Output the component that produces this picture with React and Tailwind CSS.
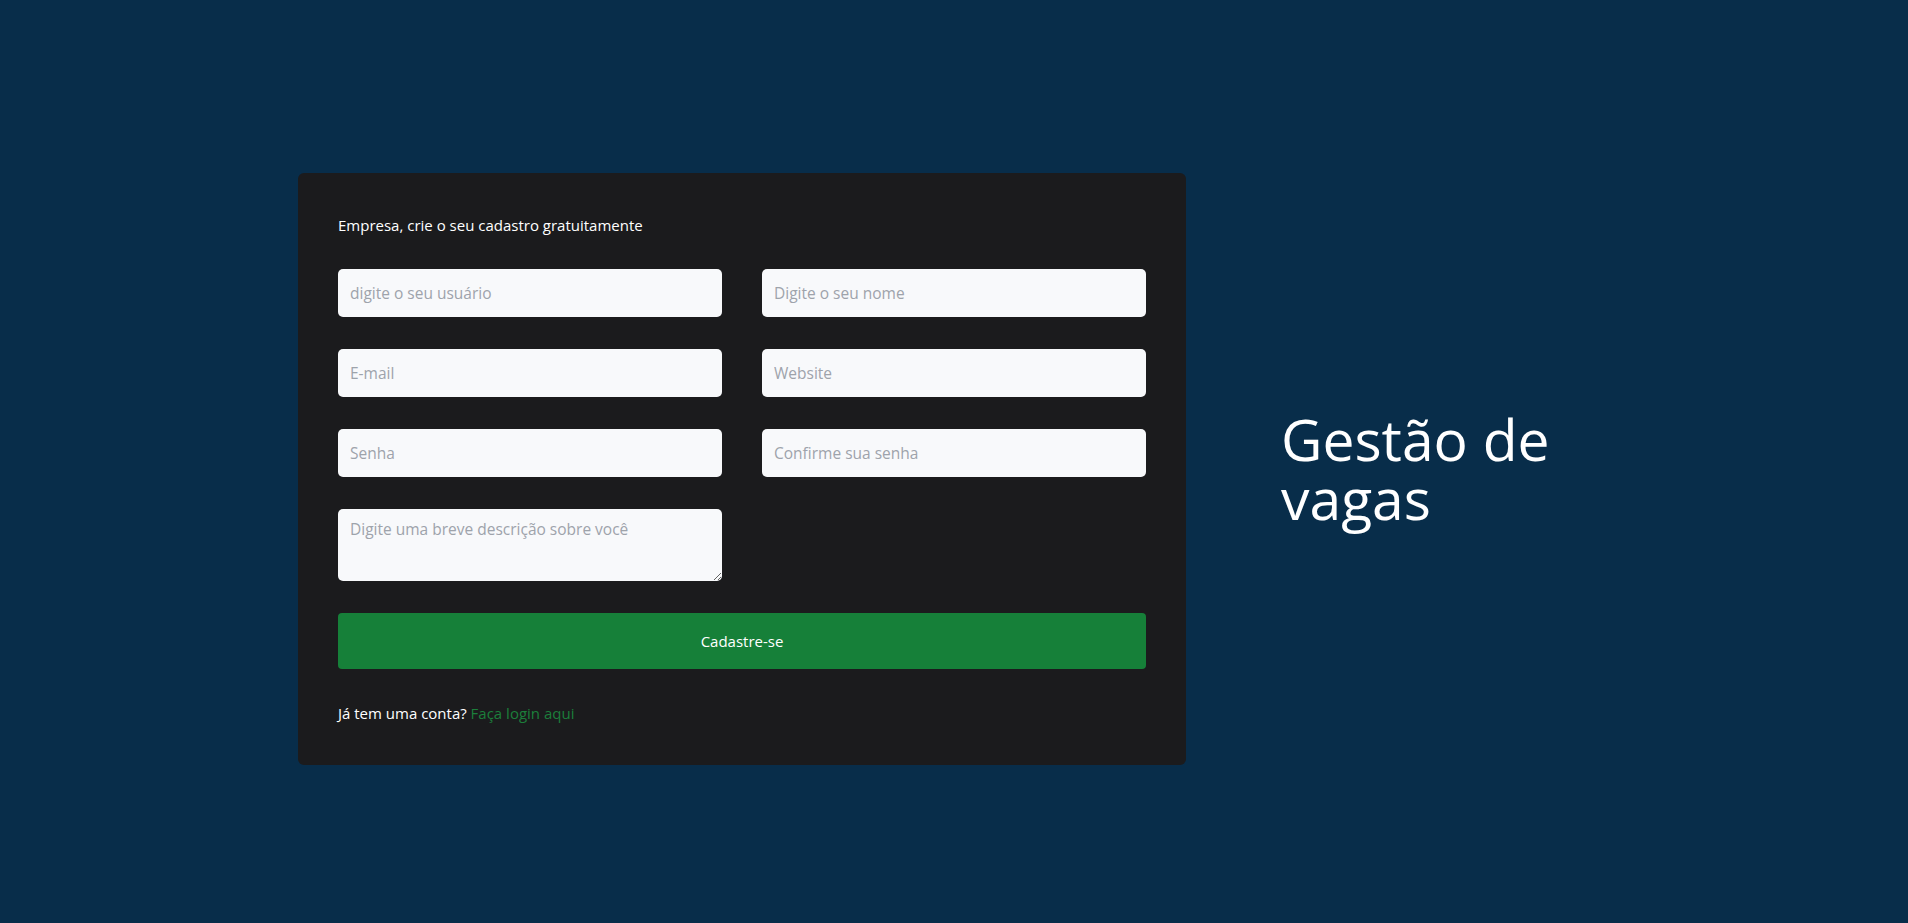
import React from "react";

// ─── Form field ────────────────────────────────────────────────────────────────
const inputCls =
  "h-12 w-full rounded-[5px] bg-[#f8f9fb] px-3 text-[15.5px] text-gray-800 outline-none placeholder:text-[#9ea3ab]";

const Field = ({ type = "text", placeholder }) => (
  <input type={type} placeholder={placeholder} className={inputCls} />
);

export default function App() {
  return (
    <div
      className="flex min-h-[923px] w-full items-center justify-center gap-[95px] bg-[#082d4a] pt-[15px]"
      style={{ fontFamily: '"Open Sans", "Noto Sans", sans-serif' }}
    >
      <form
        onSubmit={(e) => e.preventDefault()}
        className="flex w-[888px] flex-col gap-8 rounded-md bg-[#1b1b1d] p-10"
      >
        <p className="text-[15px] leading-6 text-white">
          Empresa, crie o seu cadastro gratuitamente
        </p>

        <div className="grid grid-cols-2 gap-x-10 gap-y-8">
          <Field placeholder="digite o seu usuário" />
          <Field placeholder="Digite o seu nome" />
          <Field type="email" placeholder="E-mail" />
          <Field placeholder="Website" />
          <Field type="password" placeholder="Senha" />
          <Field type="password" placeholder="Confirme sua senha" />
          <textarea
            placeholder="Digite uma breve descrição sobre você"
            className="block h-[72px] w-full rounded-[5px] bg-[#f8f9fb] px-3 py-2 text-[15.5px] leading-6 text-gray-800 outline-none placeholder:text-[#9ea3ab]"
          />
        </div>

        <button
          type="submit"
          className="h-14 w-full rounded-[4px] bg-[#168039] text-[15px] text-white"
        >
          Cadastre-se
        </button>

        <p className="text-[15px] leading-6 text-white">
          Já tem uma conta?{" "}
          <a href="#" className="text-[#1c7f3b]">
            Faça login aqui
          </a>
        </p>
      </form>

      <h1 className="w-[329px] text-[57px] font-normal leading-[59px] text-white">
        Gestão de vagas
      </h1>
    </div>
  );
}
